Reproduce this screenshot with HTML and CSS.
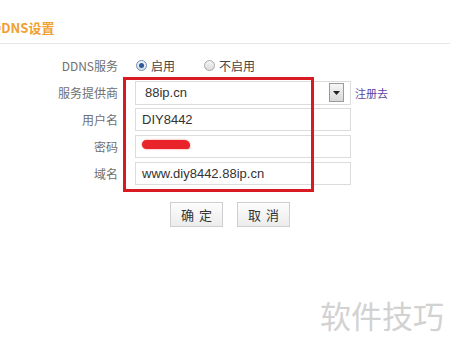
FILE: index.html
```html
<!DOCTYPE html>
<html lang="zh">
<head>
    <meta charset="UTF-8">
    <title>DDNS设置</title>
    <link rel="stylesheet" href="styles.css">
</head>
<body>
    <div class="page">
        <div class="header">
            <h1 class="title">DDNS设置</h1>
        </div>

        <div class="form">
            <div class="row">
                <label class="label">DDNS服务</label>
                <div class="radios">
                    <span class="radio checked"></span><span class="radio-text">启用</span>
                    <span class="radio"></span><span class="radio-text">不启用</span>
                </div>
            </div>

            <div class="row">
                <label class="label">服务提供商</label>
                <div class="select">
                    <span class="select-text">88ip.cn</span>
                    <span class="select-btn">
                        <svg width="7" height="4" viewBox="0 0 7 4"><path d="M0 0h7L3.5 4z" fill="#222"/></svg>
                    </span>
                </div>
                <a class="link" href="#">注册去</a>
            </div>

            <div class="row">
                <label class="label">用户名</label>
                <div class="input">DIY8442</div>
            </div>

            <div class="row">
                <label class="label">密码</label>
                <div class="input"><span class="scribble"></span></div>
            </div>

            <div class="row">
                <label class="label">域名</label>
                <div class="input">www.diy8442.88ip.cn</div>
            </div>

            <div class="buttons">
                <button class="btn">确定</button>
                <button class="btn">取消</button>
            </div>

            <div class="highlight"></div>
        </div>

        <div class="watermark">软件技巧</div>
    </div>
</body>
</html>
```

FILE: styles.css
```css
* {
    margin: 0;
    padding: 0;
    box-sizing: border-box;
}

body {
    font-family: "Noto Sans CJK SC", "Liberation Sans", sans-serif;
    background: #fff;
    width: 450px;
    height: 345px;
    overflow: hidden;
}

.page {
    position: relative;
    height: 345px;
}

.header {
    height: 44px;
    border-bottom: 1px solid #e6e6e6;
    padding-top: 20px;
    overflow: hidden;
}

.title {
    margin-left: -8px;
    font-size: 13px;
    line-height: 16px;
    font-weight: bold;
    color: #f0a030;
}

.form {
    position: relative;
    padding-top: 10px;
}

.row {
    display: flex;
    align-items: center;
    height: 23px;
    margin-bottom: 4px;
}

.label {
    width: 118px;
    text-align: right;
    font-size: 12px;
    color: #707070;
    margin-right: 17px;
}

.radios {
    display: flex;
    align-items: center;
    font-size: 12px;
    color: #444;
}

.radio {
    width: 11px;
    height: 11px;
    border-radius: 50%;
    border: 1px solid #a8a8a8;
    background: linear-gradient(#f4f4f4, #dcdcdc);
    margin-right: 4px;
    margin-left: 1px;
    display: flex;
    align-items: center;
    justify-content: center;
}

.radio.checked {
    border-color: #6c8fb8;
}

.radio.checked::after {
    content: "";
    width: 5px;
    height: 5px;
    border-radius: 50%;
    background: #2a5a9c;
}

.radio-text {
    margin-right: 28px;
}

.select,
.input {
    width: 216px;
    height: 23px;
    border: 1px solid #dcdcdc;
    background: #fff;
    display: flex;
    align-items: center;
    font-family: "Liberation Sans", sans-serif;
    font-size: 13px;
    color: #333;
    padding-left: 6px;
}

.select {
    padding-left: 9px;
    height: 24px;
}

.select-text {
    flex: 1;
}

.select-btn {
    width: 15px;
    height: 19px;
    margin-right: 6px;
    border: 1px solid #9a9a9a;
    background: linear-gradient(#f6f6f6, #d8d8d8);
    display: flex;
    align-items: center;
    justify-content: center;
}

.link {
    margin-left: 4px;
    font-size: 11px;
    color: #5b3f9e;
    text-decoration: none;
}

.scribble {
    width: 48px;
    height: 9px;
    margin-top: -4px;
    border-radius: 5px 6px 4px 5px;
    background: #e8232a;
    box-shadow: 0 0 2px #f07070;
}

.buttons {
    display: flex;
    gap: 14px;
    padding-left: 170px;
    margin-top: 17px;
}

.btn {
    width: 53px;
    height: 25px;
    border: 1px solid #cfcfcf;
    background: linear-gradient(#fdfdfd, #ececec);
    font-family: "Noto Sans CJK SC", sans-serif;
    font-size: 13px;
    color: #333;
    letter-spacing: 5px;
    padding-left: 5px;
}

.highlight {
    position: absolute;
    left: 123px;
    top: 33px;
    width: 191px;
    height: 115px;
    border: 3px solid #d91a22;
}

.watermark {
    position: absolute;
    left: 320px;
    top: 292px;
    font-size: 31px;
    color: #d2d2d2;
}
```
